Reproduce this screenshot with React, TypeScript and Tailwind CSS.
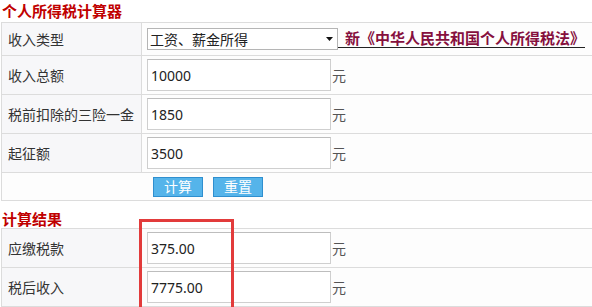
import React from "react";

const font = { fontFamily: '"Noto Sans", "Noto Sans CJK SC", sans-serif' };

function Label({ children }: { children: React.ReactNode }) {
  return (
    <div className="w-[140px] shrink-0 border-r border-[#dcdcdc] bg-[#f7f7f9] pl-[6px] flex items-center text-[14px] text-[#333]">
      {children}
    </div>
  );
}

function InputRow({ label, value, last }: { label: string; value: string; last?: boolean }) {
  return (
    <div className={`flex h-[39px] border-b border-[#dcdcdc]`}>
      <Label>{label}</Label>
      <div className="flex-1 flex items-center pl-[5px] bg-[#fdfdfd]">
        <div className="w-[184px] h-[32px] border border-[#cfcfcf] border-t-[#bdbdbd] bg-white flex items-center pl-[3px] text-[14px] text-[#222]">
          {value}
        </div>
        <span className="text-[14px] text-[#555] ml-[1px]">元</span>
      </div>
    </div>
  );
}

export default function App() {
  return (
    <div className="relative w-[592px] h-[307px] overflow-hidden bg-white" style={font}>
      <div className="h-[22px] pl-[2px] pt-[1px] text-[15px] leading-[20px] font-bold text-[#c00000]">个人所得税计算器</div>
      <div className="ml-[1px] w-[600px] border-t border-l border-[#dcdcdc]">
        <div className="flex h-[33px] border-b border-[#dcdcdc]">
          <Label>收入类型</Label>
          <div className="flex-1 flex items-center pl-[5px] bg-[#fdfdfd]">
            <div className="w-[191px] h-[22px] border border-[#b5b5b5] bg-white flex items-center justify-between pl-[2px] pr-[4px] text-[14px] text-[#222]">
              <span>工资、薪金所得</span>
              <svg width="7" height="4" viewBox="0 0 7 4"><path d="M0 0h7L3.5 4z" fill="#111" /></svg>
            </div>
            <a className="ml-0 pl-[7px] border-b border-[#222] leading-[17px] text-[15px] font-bold text-[#86103e]">新《中华人民共和国个人所得税法》</a>
          </div>
        </div>
        <InputRow label="收入总额" value="10000" />
        <InputRow label="税前扣除的三险一金" value="1850" />
        <InputRow label="起征额" value="3500" />
        <div className="flex h-[28px] border-b border-[#dcdcdc] bg-[#fdfdfd]">
          <div className="w-[140px] shrink-0" />
          <div className="flex items-center gap-[10px] pl-[11px]">
            <button className="w-[50px] h-[20px] bg-[#55b4ea] border border-[#2f8fcf] text-white text-[14px] leading-[18px]">计算</button>
            <button className="w-[50px] h-[20px] bg-[#55b4ea] border border-[#2f8fcf] text-white text-[14px] leading-[18px]">重置</button>
          </div>
        </div>
      </div>
      <div className="h-[27px] pl-[2px] pt-[10px] text-[15px] leading-[17px] font-bold text-[#c00000]">计算结果</div>
      <div className="ml-[1px] w-[600px] border-t border-l border-[#dcdcdc]">
        <InputRow label="应缴税款" value="375.00" />
        <InputRow label="税后收入" value="7775.00" />
      </div>
      <div className="absolute left-[139px] top-[219px] w-[95px] h-[120px] border-[3px] border-[#e23b3b]" />
    </div>
  );
}
